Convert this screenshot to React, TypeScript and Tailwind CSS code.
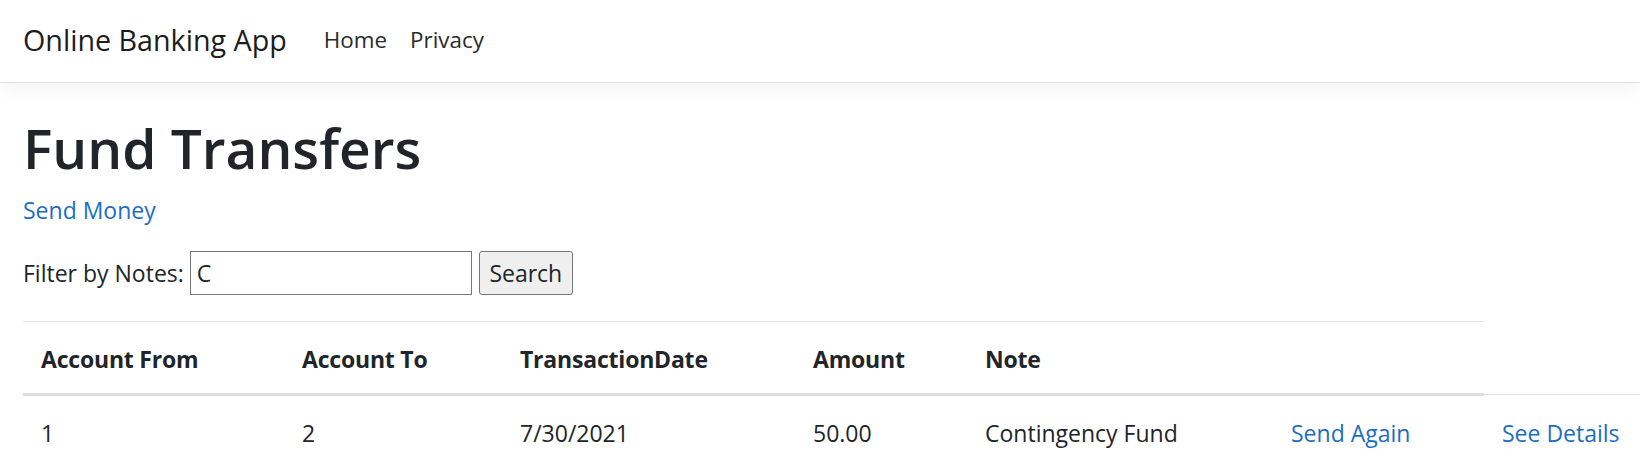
const cols = "grid grid-cols-[261px_218px_293px_172px_306px_211px_1fr]";

const headers = ["Account From", "Account To", "TransactionDate", "Amount", "Note", ""];

export default function App() {
  return (
    <div className="min-h-screen bg-white font-['Open_Sans',sans-serif] text-[#212529]">
      <header className="flex h-[83px] items-start border-b border-[#dfdfdf] bg-white pl-[23px] shadow-[0_6px_18px_rgba(0,0,0,0.05)]">
        <a href="#" className="mt-[26px] text-[28.7px] leading-none text-[#1c1c1c]">
          Online Banking App
        </a>
        <nav className="ml-[37px] mt-[29px] flex gap-[23px] text-[22.4px] leading-none text-[#2b2b2b]">
          <a href="#">Home</a>
          <a href="#">Privacy</a>
        </nav>
      </header>

      <main className="pl-[23px]">
        <h1 className="mt-[37px] text-[55px] font-semibold leading-none">Fund Transfers</h1>
        <a href="#" className="mt-[24px] block w-fit text-[23px] leading-none text-[#1b6ec2]">
          Send Money
        </a>

        <form className="mt-[29px] flex h-[44px] items-center text-[23px] leading-none">
          <label htmlFor="notes">Filter by Notes:</label>
          <input
            id="notes"
            defaultValue="C"
            className="ml-[6px] h-[44px] w-[282px] border border-[#767676] bg-white pl-[6px] text-[23px] leading-none text-[#212529] outline-none"
          />
          <button
            type="button"
            className="ml-[7px] h-[44px] w-[94px] rounded-[3px] border border-[#767676] bg-[#efefef] text-[23px] leading-none text-[#212529]"
          >
            Search
          </button>
        </form>

        <div className="mt-[26px] text-[23px] leading-none">
          <div className={cols}>
            {headers.map((h, i) => (
              <div
                key={i}
                className="border-t border-b-[3px] border-t-[#e2e2e2] border-b-[#dddddd] pb-[22px] pl-[18px] pt-[26px] font-bold tracking-[-0.2px]"
              >
                {h}
              </div>
            ))}
            <div className="mb-[1px] self-end border-b border-[#e2e2e2]" />
          </div>
          <div className={cols}>
            <div className="pl-[18px] pt-[26px] pb-[26px]">1</div>
            <div className="pl-[18px] pt-[26px] pb-[26px]">2</div>
            <div className="pl-[18px] pt-[26px] pb-[26px]">7/30/2021</div>
            <div className="pl-[18px] pt-[26px] pb-[26px]">50.00</div>
            <div className="pl-[18px] pt-[26px] pb-[26px]">Contingency Fund</div>
            <div className="pl-[18px] pt-[26px] pb-[26px]">
              <a href="#" className="text-[#1b6ec2]">Send Again</a>
            </div>
            <div className="pl-[18px] pt-[26px] pb-[26px]">
              <a href="#" className="text-[#1b6ec2]">See Details</a>
            </div>
          </div>
        </div>
      </main>
    </div>
  );
}
